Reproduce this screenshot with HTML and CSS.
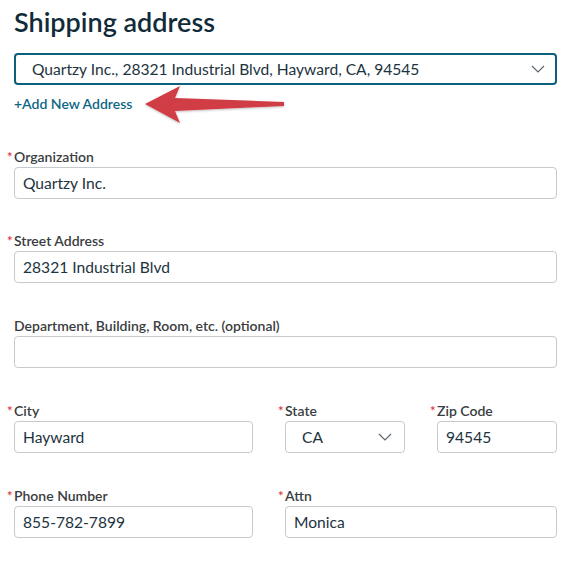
FILE: index.html
```html
<!DOCTYPE html>
<html>
<head>
<meta charset="utf-8">
<link rel="stylesheet" href="styles.css">
</head>
<body>
<div class="page">
  <h1 class="title">Shipping address</h1>
  <div class="select main-select">
    <span>Quartzy Inc., 28321 Industrial Blvd, Hayward, CA, 94545</span>
    <svg class="chev" width="14" height="8" viewBox="0 0 14 8"><path d="M1 1l6 6 6-6" fill="none" stroke="#5b6770" stroke-width="1.2"/></svg>
  </div>
  <a class="add-link">+Add New Address</a>
  <svg class="arrow" width="150" height="44" viewBox="0 0 150 44">
    <defs><filter id="sh" x="-10%" y="-20%" width="120%" height="140%"><feDropShadow dx="0" dy="1" stdDeviation="1" flood-color="#000" flood-opacity="0.25"/></filter></defs>
    <path filter="url(#sh)" d="M5 21 L40 3 L35 15 L144 19 L144 23 L35 28 L40 40 Z" fill="#d13d45"/>
  </svg>

  <div class="field first">
    <label class="label"><span class="req">*</span>Organization</label>
    <div class="input">Quartzy Inc.</div>
  </div>
  <div class="field second">
    <label class="label"><span class="req">*</span>Street Address</label>
    <div class="input">28321 Industrial Blvd</div>
  </div>
  <div class="field next">
    <label class="label">Department, Building, Room, etc. (optional)</label>
    <div class="input"></div>
  </div>
  <div class="row row3 next">
    <div class="field">
      <label class="label"><span class="req">*</span>City</label>
      <div class="input">Hayward</div>
    </div>
    <div class="field">
      <label class="label"><span class="req">*</span>State</label>
      <div class="input state">
        <span>CA</span>
        <svg class="chev" width="14" height="8" viewBox="0 0 14 8"><path d="M1 1l6 6 6-6" fill="none" stroke="#5b6770" stroke-width="1.2"/></svg>
      </div>
    </div>
    <div class="field">
      <label class="label"><span class="req">*</span>Zip Code</label>
      <div class="input">94545</div>
    </div>
  </div>
  <div class="row row2 next">
    <div class="field">
      <label class="label"><span class="req">*</span>Phone Number</label>
      <div class="input">855-782-7899</div>
    </div>
    <div class="field">
      <label class="label"><span class="req">*</span>Attn</label>
      <div class="input">Monica</div>
    </div>
  </div>
</div>
</body>
</html>
```
FILE: styles.css
```css
* { box-sizing: border-box; }
body {
  margin: 0;
  background: #fff;
  font-family: Lato, "Noto Sans", sans-serif;
  color: #1d3340;
}
.page {
  position: relative;
  width: 543px;
  margin-left: 14px;
  padding-top: 6px;
}
.title {
  margin: 0;
  font-size: 27px;
  line-height: 32px;
  font-weight: 600;
  color: #112b38;
}
.select {
  display: flex;
  align-items: center;
  justify-content: space-between;
  height: 32px;
  margin-top: 15px;
  padding: 0 10px 0 16px;
  border: 2px solid #0e5f7b;
  border-radius: 4px;
  font-size: 15.6px;
}
.add-link {
  display: block;
  margin-top: 11px;
  height: 16px;
  line-height: 16px;
  font-size: 14px;
  font-weight: 600;
  color: #0f6784;
}
.arrow {
  position: absolute;
  left: 126px;
  top: 83px;
}
.field {
  display: flex;
  flex-direction: column;
}
.first { margin-top: 37px; }
.second { margin-top: 34px; }
.next { margin-top: 35px; }
.label {
  height: 16px;
  line-height: 16px;
  font-size: 14px;
  font-weight: 600;
  color: #3a3d40;
  margin-bottom: 2px;
}
.req {
  color: #e0383e;
  margin-left: -7px;
  display: inline-block;
  width: 7px;
  font-size: 13px;
}
.input {
  height: 32px;
  border: 1px solid #c5cacf;
  border-radius: 4px;
  padding: 0 8px;
  display: flex;
  align-items: center;
  font-size: 15.6px;
  color: #1d3340;
}
.row {
  display: grid;
  column-gap: 32px;
}
.row3 { grid-template-columns: 239px 120px 120px; }
.row2 { grid-template-columns: 239px 272px; }
.state {
  justify-content: space-between;
  padding: 0 12px 0 16px;
}
```
